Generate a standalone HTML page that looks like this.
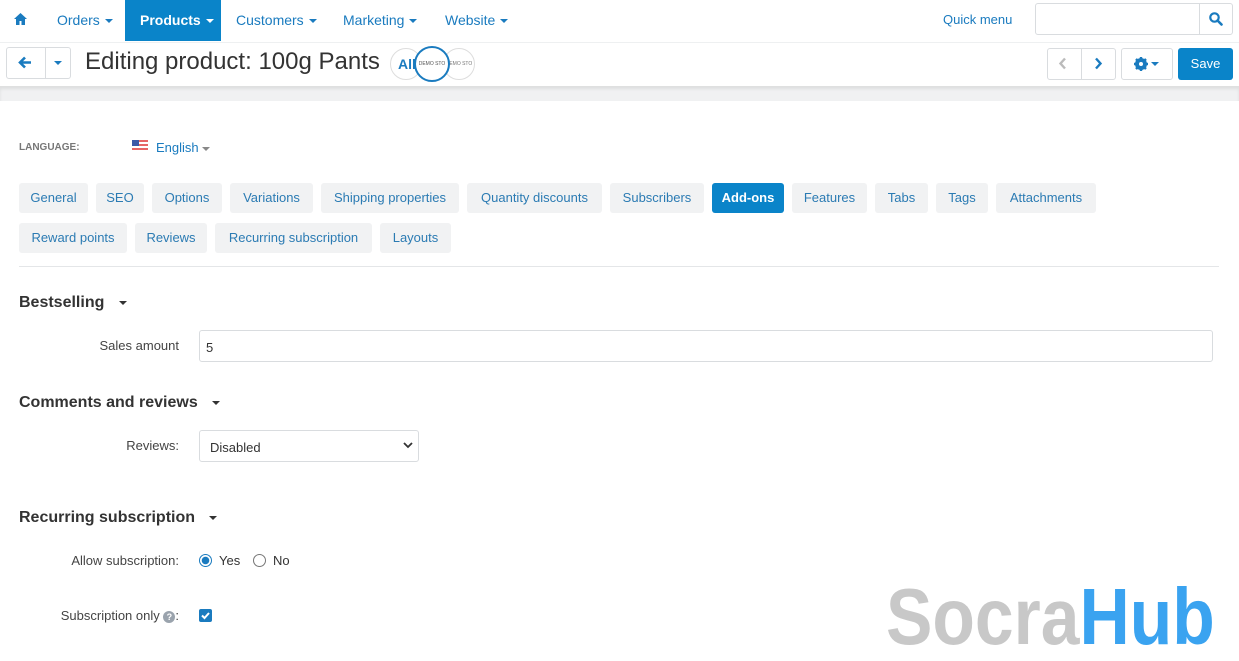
<!DOCTYPE html><html><head><style>
*{box-sizing:border-box;margin:0;padding:0}
body{width:1239px;height:651px;overflow:hidden;background:#fff;font-family:"Liberation Sans",Arial,sans-serif;font-size:13px;color:#333;position:relative}
.a{position:absolute}
.nav{color:#1a7bbf;font-size:14px;top:12px}
.car{display:inline-block;width:0;height:0;border-left:4px solid transparent;border-right:4px solid transparent;border-top:4px solid currentColor;vertical-align:middle;margin-left:5px}
.tab{position:absolute;height:30px;line-height:30px;background:#f1f2f3;border-radius:3px;color:#2b7bb3;font-size:13px;text-align:center}
.btn{position:absolute;border:1px solid #d9dcdf;border-radius:3px;background:#fff}
h3{position:absolute;font-size:16px;font-weight:bold;color:#333;left:19px}
.lbl{position:absolute;text-align:right;color:#444;font-size:13px}
</style></head><body>
<svg class="a" style="left:14px;top:13px" width="13" height="12" viewBox="0 0 13 12"><path d="M6.5 0L0 6h2v6h3.5V8h2v4H11V6h2z" fill="#1a7bbf"/></svg>
<div class="a nav" style="left:57px">Orders<span class="car"></span></div>
<div class="a" style="left:125px;top:0;width:96px;height:41px;background:#0a84c9"></div>
<div class="a nav" style="left:140px;color:#fff;font-weight:bold">Products<span class="car"></span></div>
<div class="a nav" style="left:236px">Customers<span class="car"></span></div>
<div class="a nav" style="left:343px">Marketing<span class="car"></span></div>
<div class="a nav" style="left:445px">Website<span class="car"></span></div>
<div class="a nav" style="left:943px;font-size:13px;top:12px">Quick menu</div>
<div class="btn" style="left:1035px;top:3px;width:198px;height:32px"></div>
<div class="a" style="left:1199px;top:4px;width:1px;height:30px;background:#d9dcdf"></div>
<svg class="a" style="left:1209px;top:12px" width="14" height="14" viewBox="0 0 14 14"><circle cx="5.5" cy="5.5" r="4.2" fill="none" stroke="#1a7bbf" stroke-width="2.2"/><path d="M8.5 8.5L12.5 12.5" stroke="#1a7bbf" stroke-width="2.6" stroke-linecap="round"/></svg>
<div class="a" style="left:0;top:42px;width:1239px;height:1px;background:#eef0f1"></div>
<div class="a" style="left:0;top:86px;width:1239px;height:15px;background:#f0f1f2;box-shadow:inset 0 3px 3px rgba(0,0,0,.08)"></div>
<div class="btn" style="left:6px;top:47px;width:65px;height:32px"></div>
<div class="a" style="left:45px;top:48px;width:1px;height:30px;background:#d9dcdf"></div>
<svg class="a" style="left:18px;top:56px" width="14" height="13" viewBox="0 0 14 13"><path d="M13 6.5H3M7 1.5L2 6.5l5 5" stroke="#1a7bbf" stroke-width="2.6" fill="none"/></svg>
<div class="a" style="left:54px;top:61px;border-left:4px solid transparent;border-right:4px solid transparent;border-top:4px solid #1a7bbf"></div>
<div class="a" style="left:85px;top:48px;font-size:24px;color:#333">Editing product: 100g Pants</div>
<div class="a" style="left:390px;top:48px;width:32px;height:32px;border:1px solid #ddd;border-radius:50%"></div>
<div class="a" style="left:398px;top:56px;font-size:14px;font-weight:bold;color:#1a7bbf">All</div>
<div class="a" style="left:443px;top:48px;width:32px;height:32px;border:1px solid #ddd;border-radius:50%;font-size:5px;line-height:30px;text-align:center;color:#777">DEMO STO</div>
<div class="a" style="left:414px;top:46px;width:36px;height:36px;border:2px solid #1a7bbf;border-radius:50%;background:#fff;font-size:5px;line-height:32px;text-align:center;color:#555">DEMO STO</div>
<div class="btn" style="left:1047px;top:48px;width:69px;height:32px"></div>
<div class="a" style="left:1081px;top:49px;width:1px;height:30px;background:#d9dcdf"></div>
<svg class="a" style="left:1058px;top:57px" width="10" height="13"><path d="M7 1.5L2.5 6.5 7 11.5" stroke="#bbb" stroke-width="2.4" fill="none"/></svg>
<svg class="a" style="left:1093px;top:57px" width="10" height="13"><path d="M3 1.5L7.5 6.5 3 11.5" stroke="#1a7bbf" stroke-width="2.4" fill="none"/></svg>
<div class="btn" style="left:1121px;top:48px;width:52px;height:32px"></div>
<svg class="a" style="left:1134px;top:57px" width="14" height="14" viewBox="0 0 14 14"><circle cx="7" cy="7" r="4.5" fill="none" stroke="#1a7bbf" stroke-width="3"/><path d="M7 0v14M0 7h14M2 2l10 10M12 2L2 12" stroke="#1a7bbf" stroke-width="2.4"/><circle cx="7" cy="7" r="2" fill="#fff"/></svg>
<div class="a" style="left:1151px;top:62px;border-left:4px solid transparent;border-right:4px solid transparent;border-top:4px solid #1a7bbf"></div>
<div class="a" style="left:1178px;top:48px;width:55px;height:32px;background:#0a84c9;border-radius:3px;color:#fff;text-align:center;line-height:32px;font-size:13px">Save</div>
<div class="a" style="left:19px;top:142px;font-size:10px;font-weight:bold;color:#777">LANGUAGE:</div>
<svg class="a" style="left:132px;top:140px" width="16" height="11"><rect width="16" height="11" fill="#fff"/><path d="M0 1h16M0 5h16M0 9h16" stroke="#d33" stroke-width="1.6"/><rect width="7" height="6" fill="#3b5aa8"/></svg>
<div class="a" style="left:156px;top:140px;font-size:13px;color:#1a7bbf">English<span class="car" style="margin-left:3px;color:#888"></span></div>
<div class="tab" style="left:19px;top:183px;width:69px">General</div>
<div class="tab" style="left:96px;top:183px;width:48px">SEO</div>
<div class="tab" style="left:152px;top:183px;width:70px">Options</div>
<div class="tab" style="left:230px;top:183px;width:83px">Variations</div>
<div class="tab" style="left:321px;top:183px;width:138px">Shipping properties</div>
<div class="tab" style="left:467px;top:183px;width:135px">Quantity discounts</div>
<div class="tab" style="left:610px;top:183px;width:94px">Subscribers</div>
<div class="tab" style="left:712px;top:183px;width:72px;background:#0a84c9;color:#fff;font-weight:bold">Add-ons</div>
<div class="tab" style="left:792px;top:183px;width:75px">Features</div>
<div class="tab" style="left:875px;top:183px;width:53px">Tabs</div>
<div class="tab" style="left:936px;top:183px;width:52px">Tags</div>
<div class="tab" style="left:996px;top:183px;width:100px">Attachments</div>
<div class="tab" style="left:19px;top:223px;width:108px">Reward points</div>
<div class="tab" style="left:135px;top:223px;width:72px">Reviews</div>
<div class="tab" style="left:215px;top:223px;width:157px">Recurring subscription</div>
<div class="tab" style="left:380px;top:223px;width:71px">Layouts</div>
<div class="a" style="left:19px;top:266px;width:1200px;height:1px;background:#e4e6e8"></div>
<h3 style="top:294px">Bestselling <span class="car" style="margin-left:10px;color:#333"></span></h3>
<div class="lbl" style="left:40px;width:139px;top:338px">Sales amount</div>
<div class="btn" style="left:199px;top:330px;width:1014px;height:32px;padding:9px 6px;font-size:13px">5</div>
<h3 style="top:394px">Comments and reviews <span class="car" style="margin-left:10px;color:#333"></span></h3>
<div class="lbl" style="left:40px;width:139px;top:438px">Reviews:</div>
<div class="btn" style="left:199px;top:430px;width:220px;height:32px;padding:9px 10px;font-size:13px">Disabled</div>
<svg class="a" style="left:403px;top:441px" width="10" height="8"><path d="M1 2l4 4 4-4" stroke="#333" stroke-width="1.8" fill="none"/></svg>
<h3 style="top:509px">Recurring subscription <span class="car" style="margin-left:10px;color:#333"></span></h3>
<div class="lbl" style="left:20px;width:159px;top:553px">Allow subscription:</div>
<div class="a" style="left:199px;top:554px;width:13px;height:13px;border:1px solid #1a7bbf;border-radius:50%;background:radial-gradient(#1a7bbf 0 3.5px,#fff 4px)"></div>
<div class="a" style="left:219px;top:553px">Yes</div>
<div class="a" style="left:253px;top:554px;width:13px;height:13px;border:1px solid #777;border-radius:50%"></div>
<div class="a" style="left:273px;top:553px">No</div>
<div class="lbl" style="left:20px;width:159px;top:608px">Subscription only <span style="display:inline-block;width:12px;height:12px;border-radius:50%;background:#9aa3ad;color:#fff;font-size:9px;line-height:12px;text-align:center;font-weight:bold">?</span>:</div>
<div class="a" style="left:199px;top:609px;width:13px;height:13px;background:#1a7bbf;border-radius:2px"></div>
<svg class="a" style="left:199px;top:609px" width="13" height="13"><path d="M3 6.5l2.5 2.5L10 4" stroke="#fff" stroke-width="2" fill="none"/></svg>
<div class="a" style="left:886px;top:577px;font-size:80px;font-weight:bold;line-height:80px;white-space:nowrap;transform-origin:0 0;transform:scaleX(0.87)"><span style="color:#c8c8c8">Socra</span><span style="color:#3aa3f0">Hub</span></div>
</body></html>
